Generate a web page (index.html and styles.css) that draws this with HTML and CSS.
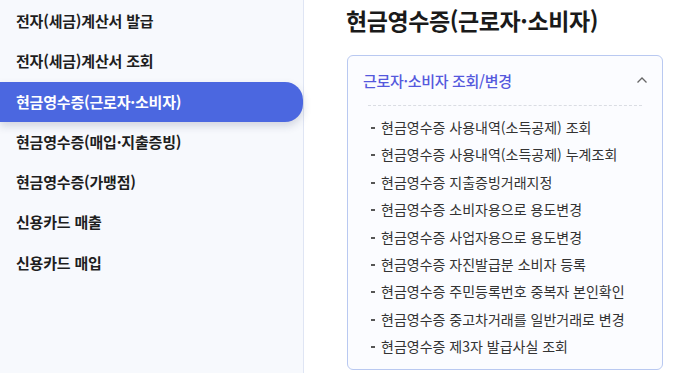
FILE: index.html
```html
<!DOCTYPE html>
<html lang="ko">

<head>
    <meta charset="UTF-8">
    <meta name="viewport" content="width=device-width, initial-scale=1.0">
    <title>현금영수증(근로자·소비자)</title>
    <link rel="stylesheet" href="styles.css">
</head>

<body>
    <div id="side_menu">
        <a class="menu_item">전자(세금)계산서 발급</a>
        <a class="menu_item">전자(세금)계산서 조회</a>
        <a class="menu_item active">현금영수증(근로자·소비자)</a>
        <a class="menu_item">현금영수증(매입·지출증빙)</a>
        <a class="menu_item">현금영수증(가맹점)</a>
        <a class="menu_item">신용카드 매출</a>
        <a class="menu_item">신용카드 매입</a>
    </div>

    <div id="content">
        <h1 class="page_title">현금영수증(근로자·소비자)</h1>

        <div class="panel">
            <div class="panel_head">
                <span>근로자·소비자 조회/변경</span>
                <svg class="chevron" width="12" height="8" viewBox="0 0 12 8">
                    <path d="M1.5 6.5 L6 2 L10.5 6.5" fill="none" stroke="#666" stroke-width="1.3"/>
                </svg>
            </div>
            <ul class="link_list">
                <li>현금영수증 사용내역(소득공제) 조회</li>
                <li>현금영수증 사용내역(소득공제) 누계조회</li>
                <li>현금영수증 지출증빙거래지정</li>
                <li>현금영수증 소비자용으로 용도변경</li>
                <li>현금영수증 사업자용으로 용도변경</li>
                <li>현금영수증 자진발급분 소비자 등록</li>
                <li>현금영수증 주민등록번호 중복자 본인확인</li>
                <li>현금영수증 중고차거래를 일반거래로 변경</li>
                <li>현금영수증 제3자 발급사실 조회</li>
            </ul>
        </div>
    </div>
</body>

</html>
```

FILE: styles.css
```css
body {
    font-family: "Noto Sans CJK KR", "Noto Sans", sans-serif;
    margin: 0;
    display: flex;
    height: 100vh;
    background-color: #fff;
    color: #222;
    overflow: hidden;
}

#side_menu {
    width: 303px;
    padding-top: 1px;
    background-color: #f7f9fd;
    border-right: 1px solid #dfe5f4;
    display: flex;
    flex-direction: column;
}

.menu_item {
    height: 40.3px;
    line-height: 40.3px;
    padding-left: 16px;
    font-size: 15px;
    font-weight: 700;
    color: #1e1e1e;
    letter-spacing: -0.2px;
    cursor: pointer;
}

.menu_item.active {
    background-color: #4b67e0;
    color: #fff;
    border-radius: 0 18px 18px 0;
    box-shadow: 0px 4px 8px rgba(40, 50, 90, 0.18);
}

#content {
    padding-left: 42px;
    padding-right: 10px;
    flex: 1;
}

.page_title {
    font-size: 23px;
    font-weight: 700;
    margin: 4px 0 0 0;
    line-height: 32px;
    letter-spacing: -0.4px;
    color: #1a1a1a;
}

.panel {
    margin-top: 19px;
    margin-left: 1px;
    border: 1px solid #b9c9f1;
    border-radius: 6px;
    background-color: #fbfcff;
    padding-bottom: 8px;
}

.panel_head {
    display: flex;
    justify-content: space-between;
    align-items: center;
    height: 49px;
    padding: 0 14px 0 15px;
    font-size: 15px;
    font-weight: 500;
    color: #5559dd;
    letter-spacing: -0.3px;
}

.chevron {
    margin-top: -2px;
}

.link_list {
    list-style: none;
    margin: 0 20px;
    padding: 8px 0 0 0;
    border-top: 1px dashed #dadde3;
}

.link_list li {
    height: 27.4px;
    line-height: 27.4px;
    padding-left: 13px;
    font-size: 14px;
    color: #333;
    position: relative;
}

.link_list li::before {
    content: "";
    position: absolute;
    left: 3px;
    top: 13px;
    width: 4px;
    height: 2px;
    background-color: #555;
}
```
